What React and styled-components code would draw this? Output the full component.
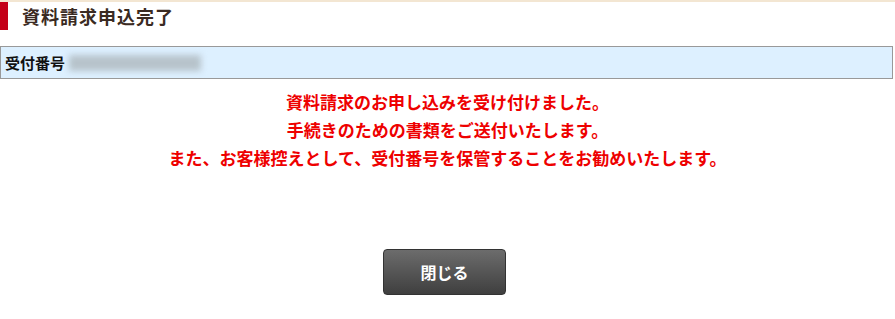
import { createGlobalStyle, styled } from "styled-components";

const GlobalStyle = createGlobalStyle`
  html, body {
    margin: 0;
    padding: 0;
    background: #ffffff;
  }
  body {
    font-family: "Noto Sans CJK JP", "Noto Sans", sans-serif;
  }
`;

const Page = styled.div`
  width: 895px;
  height: 319px;
  border-top: 2px solid #f3e6d2;
  box-sizing: border-box;
  display: flex;
  flex-direction: column;
`;

const Title = styled.h1`
  margin: 0;
  height: 28px;
  display: flex;
  align-items: center;
  gap: 14px;
  font-size: 18px;
  font-weight: bold;
  letter-spacing: 1px;
  color: #3a2a22;
  &::before {
    content: "";
    width: 8px;
    align-self: stretch;
    background: #c40018;
  }
`;

const NumberBox = styled.div`
  margin-top: 16px;
  width: 893px;
  height: 33px;
  box-sizing: border-box;
  border: 1px solid #999999;
  background: #ddf0ff;
  display: flex;
  align-items: center;
  gap: 4px;
  padding-left: 4px;
  font-size: 15px;
  font-weight: bold;
  color: #111111;
`;

const Blurred = styled.span`
  width: 132px;
  height: 16px;
  background: #b7c3cb;
  filter: blur(3px);
`;

const Message = styled.div`
  margin-top: 9px;
  display: flex;
  flex-direction: column;
  align-items: center;
  font-size: 17px;
  font-weight: bold;
  line-height: 28px;
  color: #ee0000;
`;

const ButtonRow = styled.div`
  margin-top: 77px;
  display: flex;
  justify-content: center;
`;

const CloseButton = styled.button`
  width: 123px;
  height: 46px;
  margin-left: -6px;
  border: 1px solid #333333;
  border-radius: 4px;
  background: linear-gradient(#6c6c6c, #3f3f3f);
  color: #ffffff;
  font-family: inherit;
  font-size: 16px;
  font-weight: bold;
  cursor: pointer;
`;

export default function App() {
  return (
    <>
      <GlobalStyle />
      <Page>
        <Title>資料請求申込完了</Title>
        <NumberBox>
          受付番号
          <Blurred />
        </NumberBox>
        <Message>
          <span>資料請求のお申し込みを受け付けました。</span>
          <span>手続きのための書類をご送付いたします。</span>
          <span>また、お客様控えとして、受付番号を保管することをお勧めいたします。</span>
        </Message>
        <ButtonRow>
          <CloseButton>閉じる</CloseButton>
        </ButtonRow>
      </Page>
    </>
  );
}
